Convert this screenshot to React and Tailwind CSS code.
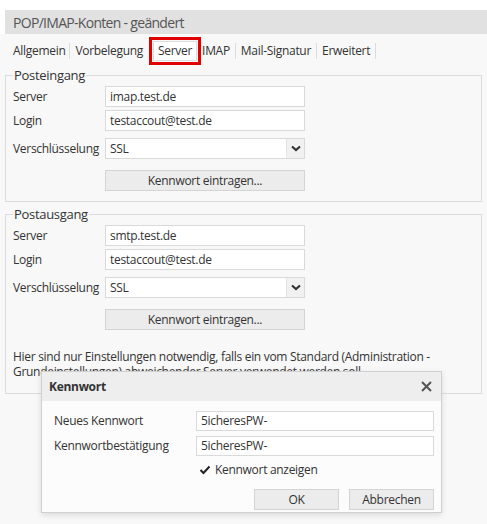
import React from 'react';

const tabs = ['Allgemein', 'Vorbelegung', 'Server', 'IMAP', 'Mail-Signatur', 'Erweitert'];

const Chevron = () => (
    <svg width="10" height="7" viewBox="0 0 10 7" fill="none">
        <path d="M1 1.5 L5 5 L9 1.5" stroke="#333" strokeWidth="2.2" />
    </svg>
);

const TextField = ({ value, className = '' }) => (
    <div className={`w-[200px] h-[21px] bg-white border border-[#d9d9d9] flex items-center px-[4px] ${className}`}>
        {value}
    </div>
);

const SelectField = ({ value, className = '' }) => (
    <div className={`w-[200px] h-[21px] bg-white border border-[#d9d9d9] flex items-center ${className}`}>
        <span className="flex-1 pl-[4px]">{value}</span>
        <span className="w-[18px] h-full bg-[#f1f1f1] border-l border-[#e3e3e3] flex items-center justify-center">
            <Chevron />
        </span>
    </div>
);

const Row = ({ label, children, className = '' }) => (
    <div className={`flex items-center ${className}`}>
        <span className="w-[92px]">{label}</span>
        {children}
    </div>
);

const ServerGroup = ({ title, host, children, className = '' }) => (
    <fieldset className={`mx-[5px] border border-[#dcdcdc] px-[7px] ${className}`}>
        <legend className="px-[1px] text-[13px] leading-[16px]">{title}</legend>
        <Row label="Server" className="mt-[3px]"><TextField value={host} /></Row>
        <Row label="Login" className="mt-[3px]"><TextField value="testaccout@test.de" /></Row>
        <Row label="Verschlüsselung" className="mt-[7px]"><SelectField value="SSL" /></Row>
        <div className="pl-[92px] mt-[11px]">
            <button className="w-[200px] h-[21px] bg-[#ececec] border border-[#d4d4d4] text-[#333]">
                Kennwort eintragen...
            </button>
        </div>
        {children}
    </fieldset>
);

const PasswordDialog = () => (
    <div className="absolute left-[41px] top-[371px] w-[401px] h-[142px] bg-[#fcfcfc] border border-[#d0d0d0] shadow-[0_2px_6px_rgba(0,0,0,0.12)]">
        <div className="h-[29px] bg-[#eeeeee] flex items-center justify-between pl-[7px] pr-[9px]">
            <span className="font-bold text-[#333]">Kennwort</span>
            <svg width="11" height="11" viewBox="0 0 11 11">
                <path d="M1 1 L10 10 M10 1 L1 10" stroke="#555" strokeWidth="2" />
            </svg>
        </div>
        <div className="pl-[12px] pr-[7px] pt-[10px]">
            <div className="flex items-center">
                <span className="w-[142px]">Neues Kennwort</span>
                <div className="flex-1 h-[20px] bg-white border border-[#d9d9d9] flex items-center px-[4px]">5icheresPW-</div>
            </div>
            <div className="flex items-center mt-[5px]">
                <span className="w-[142px]">Kennwortbestätigung</span>
                <div className="flex-1 h-[20px] bg-white border border-[#d9d9d9] flex items-center px-[4px]">5icheresPW-</div>
            </div>
            <div className="flex items-center mt-[4px] pl-[145px] h-[20px]">
                <svg width="12" height="10" viewBox="0 0 12 10" className="mr-[4px]">
                    <path d="M1.5 5 L4.5 8 L10.5 1.5" stroke="#222" strokeWidth="2" fill="none" />
                </svg>
                <span>Kennwort anzeigen</span>
            </div>
            <div className="flex justify-end gap-[10px] mt-[9px]">
                <button className="w-[85px] h-[21px] bg-[#ececec] border border-[#d4d4d4]">OK</button>
                <button className="w-[85px] h-[21px] bg-[#ececec] border border-[#d4d4d4]">Abbrechen</button>
            </div>
        </div>
    </div>
);

// padding per tab so the separators fall where the tab strip draws them
const tabPad = {
    Allgemein: 'pr-[4px]',
    Vorbelegung: 'px-[5px]',
    IMAP: 'pl-[1px] pr-[5px]',
    'Mail-Signatur': 'px-[5px]',
    Erweitert: 'px-[5px]',
};

export default function App() {
    return (
        <div className="relative w-[487px] h-[524px] bg-white text-[12px] tracking-[-0.3px] text-[#333] font-['Segoe_UI','Open_Sans',sans-serif] overflow-hidden">
            <div className="pt-[10px]">
                <div className="ml-[5px] h-[24px] bg-[#e1e1e1] flex items-center pl-[8px] text-[14px] tracking-[-0.7px] text-[#555]">
                    POP/IMAP-Konten - geändert
                </div>
            </div>
            <div className="bg-[#f8f8f8] h-[490px]">
                <div className="flex items-center h-[33px] pl-[13px] pt-[1px]">
                    {tabs.map((t, i) => (
                        <React.Fragment key={t}>
                            {t === 'Server' ? (
                                <div className="ml-[1px] h-[28px] px-px border-[3px] border-[#e00000] flex items-center">
                                    <span className="bg-white border border-[#ddd] px-[4px] leading-[18px]">{t}</span>
                                </div>
                            ) : (
                                <span className={tabPad[t]}>{t}</span>
                            )}
                            {t !== 'Server' && tabs[i + 1] !== 'Server' && (
                                <span className="w-px h-[16px] bg-[#dcdcdc]" />
                            )}
                        </React.Fragment>
                    ))}
                </div>
                <ServerGroup title="Posteingang" host="imap.test.de" className="pb-[10px]" />
                <ServerGroup title="Postausgang" host="smtp.test.de" className="mt-[4px] pb-[14px]">
                    <p className="mt-[19px] leading-[15px]">
                        Hier sind nur Einstellungen notwendig, falls ein vom Standard (Administration - Grundeinstellungen) abweichender Server verwendet werden soll.
                    </p>
                </ServerGroup>
            </div>
            <PasswordDialog />
        </div>
    );
}
